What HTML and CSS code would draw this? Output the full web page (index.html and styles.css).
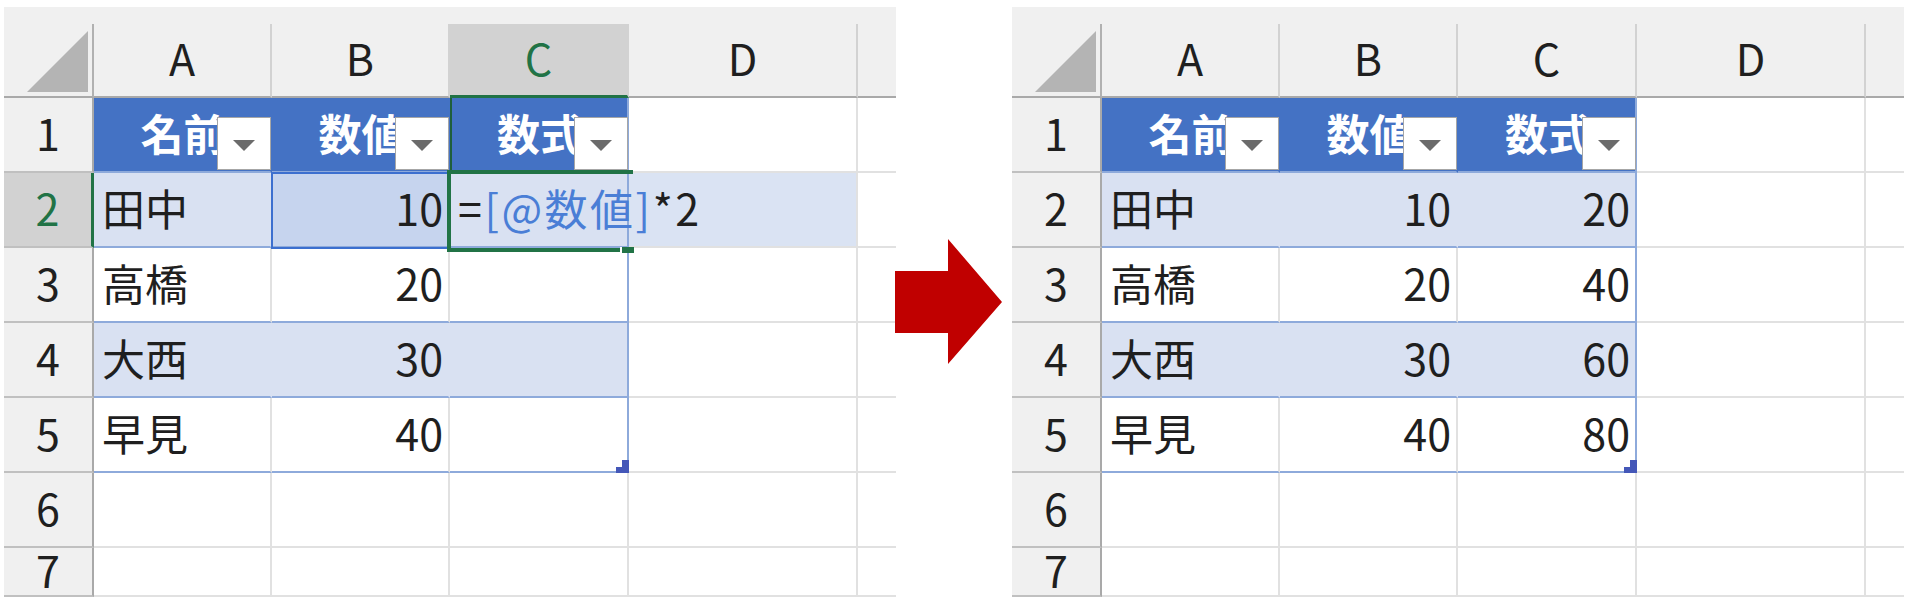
FILE: index.html
```html
<!DOCTYPE html>
<html lang="ja">
<head>
    <meta charset="UTF-8">
    <title>テーブルの構造化参照</title>
    <link rel="stylesheet" href="styles.css">
</head>
<body>
    <div class="page">

        <!-- before: typing the formula in C2 -->
        <div class="sheet">
            <div class="strip"></div>
            <div class="corner"><svg width="61" height="61" viewBox="0 0 61 61"><polygon points="61,0 61,61 0,61" fill="#b4b4b4"/></svg></div>
            <div class="col">A</div>
            <div class="col">B</div>
            <div class="col col-cur">C</div>
            <div class="col">D</div>
            <div class="col col-end"></div>

            <div class="row">1</div>
            <div class="cell th">名前<span class="filter"></span></div>
            <div class="cell th">数値<span class="filter"></span></div>
            <div class="cell th th-cur edge">数式<span class="filter"></span></div>
            <div class="cell"></div>
            <div class="cell end"></div>

            <div class="row row-cur">2</div>
            <div class="cell t band">田中</div>
            <div class="cell t band num ref">10</div>
            <div class="cell t band edge active formula"><span>=</span><span class="fref">[@数値]</span><span>*2</span></div>
            <div class="cell overflow-fill"></div>
            <div class="cell end"></div>

            <div class="row">3</div>
            <div class="cell t">高橋</div>
            <div class="cell t num">20</div>
            <div class="cell t edge"></div>
            <div class="cell"></div>
            <div class="cell end"></div>

            <div class="row">4</div>
            <div class="cell t band">大西</div>
            <div class="cell t band num">30</div>
            <div class="cell t band edge"></div>
            <div class="cell"></div>
            <div class="cell end"></div>

            <div class="row">5</div>
            <div class="cell t">早見</div>
            <div class="cell t num">40</div>
            <div class="cell t edge grip"></div>
            <div class="cell"></div>
            <div class="cell end"></div>

            <div class="row">6</div>
            <div class="cell"></div>
            <div class="cell"></div>
            <div class="cell"></div>
            <div class="cell"></div>
            <div class="cell end"></div>

            <div class="row">7</div>
            <div class="cell"></div>
            <div class="cell"></div>
            <div class="cell"></div>
            <div class="cell"></div>
            <div class="cell end"></div>
        </div>

        <svg class="arrow" width="107" height="125" viewBox="0 0 107 125"><polygon points="0,32 53,32 53,0 107,63 53,125 53,94 0,94" fill="#c00000"/></svg>

        <!-- after: the formula filled down the column -->
        <div class="sheet">
            <div class="strip"></div>
            <div class="corner"><svg width="61" height="61" viewBox="0 0 61 61"><polygon points="61,0 61,61 0,61" fill="#b4b4b4"/></svg></div>
            <div class="col">A</div>
            <div class="col">B</div>
            <div class="col">C</div>
            <div class="col">D</div>
            <div class="col col-end"></div>

            <div class="row">1</div>
            <div class="cell th">名前<span class="filter"></span></div>
            <div class="cell th">数値<span class="filter"></span></div>
            <div class="cell th edge">数式<span class="filter"></span></div>
            <div class="cell"></div>
            <div class="cell end"></div>

            <div class="row">2</div>
            <div class="cell t band">田中</div>
            <div class="cell t band num">10</div>
            <div class="cell t band num edge">20</div>
            <div class="cell"></div>
            <div class="cell end"></div>

            <div class="row">3</div>
            <div class="cell t">高橋</div>
            <div class="cell t num">20</div>
            <div class="cell t num edge">40</div>
            <div class="cell"></div>
            <div class="cell end"></div>

            <div class="row">4</div>
            <div class="cell t band">大西</div>
            <div class="cell t band num">30</div>
            <div class="cell t band num edge">60</div>
            <div class="cell"></div>
            <div class="cell end"></div>

            <div class="row">5</div>
            <div class="cell t">早見</div>
            <div class="cell t num">40</div>
            <div class="cell t num edge grip">80</div>
            <div class="cell"></div>
            <div class="cell end"></div>

            <div class="row">6</div>
            <div class="cell"></div>
            <div class="cell"></div>
            <div class="cell"></div>
            <div class="cell"></div>
            <div class="cell end"></div>

            <div class="row">7</div>
            <div class="cell"></div>
            <div class="cell"></div>
            <div class="cell"></div>
            <div class="cell"></div>
            <div class="cell end"></div>
        </div>

    </div>
</body>
</html>
```

FILE: styles.css
```css
* {
    margin: 0;
    padding: 0;
    box-sizing: border-box;
}

body {
    background: #fff;
    color: #1f1f1f;
    font-family: "Noto Sans CJK JP", "Noto Sans", sans-serif;
}

.page {
    display: flex;
    align-items: flex-start;
    padding: 7px 0 0 4px;
}

.sheet {
    flex: none;
    display: grid;
    grid-template-columns: 90px 178px 178px 179px 229px 38px;
    grid-template-rows: 17px 74px repeat(6, 75px) 49px;
    width: 892px;
    height: 590px;
    overflow: hidden;
    font-size: 43px;
}

.arrow {
    flex: none;
    margin: 232px 10px 0 -1px;
}

/* headers */

.strip {
    grid-column: 1 / -1;
    background: #f0f0f0;
}

.corner {
    display: flex;
    justify-content: flex-end;
    align-items: flex-end;
    padding: 0 4px 4px 0;
    background: #f0f0f0;
    border-right: 2px solid #b1b1b1;
    border-bottom: 2px solid #a9a9a9;
}

.col {
    display: flex;
    align-items: center;
    justify-content: center;
    padding-bottom: 6px;
    background: #f0f0f0;
    border-right: 2px solid #d2d2d2;
    border-bottom: 2px solid #a9a9a9;
}

.col-end {
    border-right: 0;
}

.col-cur {
    background: #d2d2d2;
    color: #217346;
    border-bottom: 3px solid #217346;
}

.row {
    display: flex;
    align-items: center;
    justify-content: center;
    padding-bottom: 6px;
    background: #f0f0f0;
    border-right: 2px solid #a9a9a9;
    border-bottom: 2px solid #c0c0c0;
}

.row-cur {
    background: #d2d2d2;
    color: #217346;
    border-right: 3px solid #217346;
}

/* cells */

.cell {
    display: flex;
    align-items: center;
    white-space: nowrap;
    padding: 0 5px 6px 8px;
    border-right: 2px solid #e1e1e1;
    border-bottom: 2px solid #e1e1e1;
}

.num {
    justify-content: flex-end;
}

.t {
    border-bottom-color: #8eaadb;
}

.band {
    background: #d9e1f2;
    border-right-color: transparent;
}

.th {
    position: relative;
    justify-content: center;
    background: #4472c4;
    color: #fff;
    font-weight: bold;
    border-right-color: transparent;
    border-bottom-color: #8eaadb;
}

.th-cur {
    box-shadow: inset 2px 0 0 #1f5f3b;
}

.edge {
    border-right-color: #8eaadb;
}

.end {
    border-right: 0;
}

.filter {
    position: absolute;
    right: -1px;
    bottom: 1px;
    width: 54px;
    height: 53px;
    display: flex;
    align-items: center;
    justify-content: center;
    background: #fff;
    border: 1px solid #a6a6a6;
}

.filter::after {
    content: "";
    margin-top: 3px;
    border-left: 11px solid transparent;
    border-right: 11px solid transparent;
    border-top: 11px solid #6b6b6b;
}

/* selection in the left sheet */

.ref {
    position: relative;
    z-index: 1;
    background: #c6d4ee;
    outline: 2px solid #3c6fcf;
    outline-offset: -1px;
}

.active {
    position: relative;
    z-index: 2;
    overflow: visible;
}

.active::before {
    content: "";
    position: absolute;
    top: -3px;
    left: -3px;
    right: -6px;
    bottom: -6px;
    border: 4px solid #217346;
    border-right: 0;
}

.active::after {
    content: "";
    position: absolute;
    right: -7px;
    bottom: -7px;
    width: 12px;
    height: 6px;
    background: #217346;
    box-shadow: -2px 0 0 #fff;
}

.formula {
    letter-spacing: 2.5px;
}

.fref {
    color: #4a7ed6;
}

.overflow-fill {
    background: #dae3f3;
}

.grip {
    position: relative;
}

.grip::before {
    content: "";
    position: absolute;
    right: -2px;
    bottom: -2px;
    width: 13px;
    height: 6px;
    background: #4457b8;
}

.grip::after {
    content: "";
    position: absolute;
    right: -2px;
    bottom: 4px;
    width: 7px;
    height: 7px;
    background: #4457b8;
}
```
